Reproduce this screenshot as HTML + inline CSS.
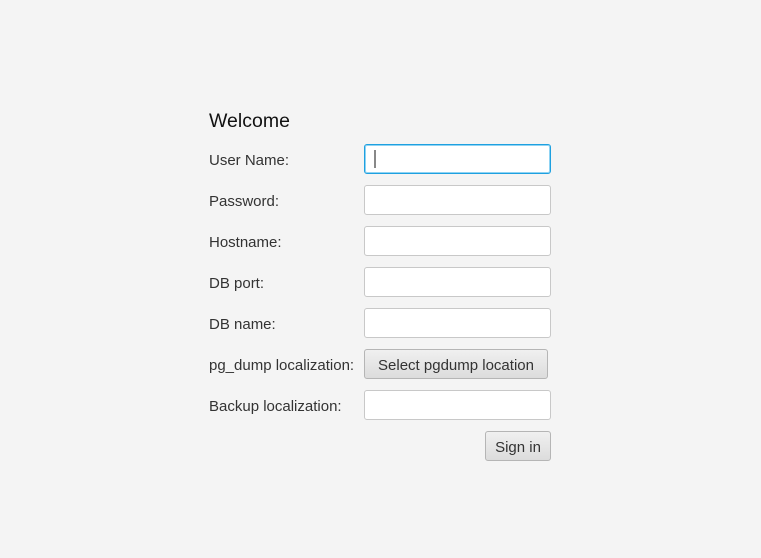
<!DOCTYPE html>
<html><head><style>
body{margin:0;width:761px;height:558px;background:#f4f4f4;font-family:"Liberation Sans",sans-serif;position:relative;overflow:hidden;color:#333}
.l{position:absolute;left:209px;font-size:15px;line-height:30px;height:30px;margin-top:2px}
.f{position:absolute;left:364px;width:185px;height:28px;background:#fff;border:1px solid #c8c8c8;border-radius:3px}
.b{position:absolute;height:28px;border:1px solid #b5b5b5;border-radius:3px;background:linear-gradient(#f0f0f0,#dcdcdc);font-size:15px;line-height:31px;text-align:center;color:#333}
</style></head><body>
<div style="position:absolute;left:209px;top:110px;font-size:19.5px;color:#111">Welcome</div>
<div class="l" style="top:144px">User Name:</div>
<div class="f" style="top:144px;border:1px solid #1ea0e0;box-shadow:0 0 0 1px #8fd3f3 inset"><div style="position:absolute;left:9px;top:5px;width:2px;height:18px;background:#888"></div></div>
<div class="l" style="top:185px">Password:</div><div class="f" style="top:185px"></div>
<div class="l" style="top:226px">Hostname:</div><div class="f" style="top:226px"></div>
<div class="l" style="top:267px">DB port:</div><div class="f" style="top:267px"></div>
<div class="l" style="top:308px">DB name:</div><div class="f" style="top:308px"></div>
<div class="l" style="top:349px">pg_dump localization:</div>
<div class="b" style="top:349px;left:364px;width:182px">Select pgdump location</div>
<div class="l" style="top:390px">Backup localization:</div><div class="f" style="top:390px"></div>
<div class="b" style="top:431px;left:485px;width:64px">Sign in</div>
</body></html>
